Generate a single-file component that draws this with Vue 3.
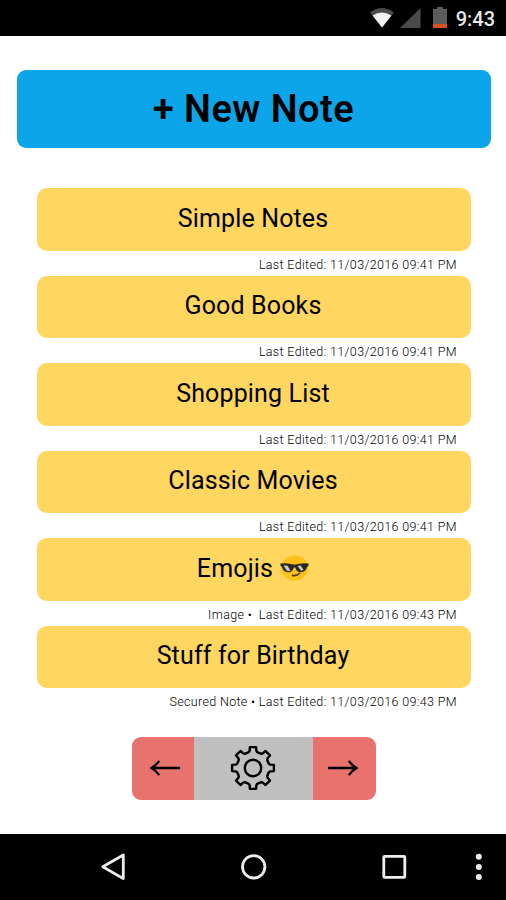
<template>
  <div class="phone">
    <header class="status-bar">
      <svg class="wifi" width="24" height="20" viewBox="0 0 24 20">
        <path d="M0 4.6Q12-4.4 24 4.6L12 19.5Z" fill="#4a4a4a" />
        <path d="M2.6 7.6Q12 1.4 21.4 7.6L12 19.5Z" fill="#f2f2f2" />
      </svg>
      <svg class="signal" width="21" height="20" viewBox="0 0 21 20">
        <path d="M20.5 0V20H0Z" fill="#4a4a4a" />
      </svg>
      <svg class="battery" width="14" height="21" viewBox="0 0 14 21">
        <path d="M4 0H10V2H14V17H0V2H4Z" fill="#5c5c5c" />
        <path d="M0 17H14V21H0Z" fill="#d9501e" />
      </svg>
      <span class="clock">9:43</span>
    </header>

    <main class="content">
      <button class="new-note">+ New Note</button>

      <ul class="notes">
        <li v-for="note in notes" :key="note.title" class="note">
          <button class="note-title">
            {{ note.title }}
            <svg v-if="note.cool" class="emoji" width="29" height="26" viewBox="0 0 28 26">
              <ellipse cx="14" cy="13" rx="13.6" ry="12.6" fill="#fcc21b" />
              <path d="M0 8.6Q7 7.6 14 9.8Q21 7.6 28 8.6V11L26.6 11.8Q25.4 17.2 20.4 17.2Q16 17 14.8 12.4H13.4Q12 17 7.6 17.2Q2.6 17.2 1.4 11.8L0 11Z" fill="#2b2a25" />
              <path d="M3 10.4L7 10.8L10 16L6.4 15.8ZM17 11L20 10.6L23 14.8L20.6 15.8Z" fill="#cfcdc0" />
              <path d="M12 20.4Q16 21.4 19 18.4" fill="none" stroke="#5b3a12" stroke-width="1.6" stroke-linecap="round" />
            </svg>
          </button>
          <div class="note-meta">{{ note.prefix }}Last Edited: {{ note.edited }}</div>
        </li>
      </ul>

      <nav class="pager">
        <button class="pager-arrow prev">
          <svg width="32" height="18" viewBox="0 0 32 18">
            <path d="M31 9H3M10.2 1.8Q7 6.6 2.2 9Q7 11.4 10.2 16.2" />
          </svg>
        </button>
        <button class="pager-settings">
          <svg width="46" height="46" viewBox="-23 -23 46 46">
            <path :d="gearPath" />
            <circle r="8.2" />
          </svg>
        </button>
        <button class="pager-arrow next">
          <svg width="32" height="18" viewBox="0 0 32 18">
            <path d="M1 9H29M21.8 1.8Q25 6.6 29.8 9Q25 11.4 21.8 16.2" />
          </svg>
        </button>
      </nav>
    </main>

    <footer class="nav-bar">
      <svg width="426" height="66" viewBox="80 834 426 66">
        <path d="M123.3 855V878.6L102.8 866.8Z" />
        <circle cx="253.7" cy="866.8" r="11.2" />
        <rect x="383.8" y="856.3" width="21" height="21" rx="0.8" />
        <g class="dots">
          <circle cx="478.8" cy="856.8" r="3" />
          <circle cx="478.8" cy="866.9" r="3" />
          <circle cx="478.8" cy="877" r="3" />
        </g>
      </svg>
    </footer>
  </div>
</template>

<script setup>
const notes = [
  { title: 'Simple Notes', prefix: '', edited: '11/03/2016 09:41 PM' },
  { title: 'Good Books', prefix: '', edited: '11/03/2016 09:41 PM' },
  { title: 'Shopping List', prefix: '', edited: '11/03/2016 09:41 PM' },
  { title: 'Classic Movies', prefix: '', edited: '11/03/2016 09:41 PM' },
  { title: 'Emojis', prefix: 'Image •\u00a0 ', edited: '11/03/2016 09:43 PM', cool: true },
  { title: 'Stuff for Birthday', prefix: 'Secured Note • ', edited: '11/03/2016 09:43 PM' }
];

// One tooth plus the valley after it, turned eight times
const tooth = [[-4.2, -15.8], [-3.4, -17.2], [-3.1, -20.9], [3.1, -20.9], [3.4, -17.2], [4.2, -15.8]];

const gearPath = buildGear();

function buildGear() {
  const points = [];
  for (let i = 0; i < 8; i++) {
    const a = (i * Math.PI) / 4;
    tooth.forEach(([x, y]) => {
      const px = x * Math.cos(a) - y * Math.sin(a);
      const py = x * Math.sin(a) + y * Math.cos(a);
      points.push(px.toFixed(2) + ' ' + py.toFixed(2));
    });
  }
  return 'M' + points.join('L') + 'Z';
}
</script>

<style>
body {
  margin: 0;
}
</style>

<style scoped>
.phone {
  display: flex;
  flex-direction: column;
  height: 900px;
  background: #fff;
  color: #000;
  font-family: Roboto, "Liberation Sans", sans-serif;
}

button {
  border: none;
  padding: 0;
  color: inherit;
  font-family: inherit;
}

.status-bar {
  display: flex;
  align-items: center;
  justify-content: flex-end;
  box-sizing: border-box;
  height: 35.5px;
  padding: 0 11px 0 0;
  background: #000;
}

.wifi {
  margin-right: 6px;
}

.signal {
  margin-right: 12px;
}

.battery {
  margin-right: 9px;
}

.clock {
  color: #e8e8e8;
  font-size: 20px;
  font-weight: 500;
  line-height: 38px;
  padding-top: 2px;
}

.content {
  flex: 1;
  display: flex;
  flex-direction: column;
  align-items: center;
  padding-left: 1px;
}

.new-note {
  width: 474px;
  height: 78px;
  margin-top: 34.5px;
  border-radius: 9px;
  background: #0da5e9;
  font-size: 38px;
  font-weight: 600;
  letter-spacing: 0.45px;
}

.notes {
  width: 434px;
  margin: 40.4px 0 0;
  padding: 0;
  list-style: none;
}

.note {
  height: 87.5px;
}

.note-title {
  display: flex;
  align-items: center;
  justify-content: center;
  gap: 7px;
  width: 100%;
  height: 62.5px;
  padding: 0 1px 3px 0;
  border-radius: 10px;
  background: #ffd65f;
  font-size: 25px;
  font-weight: 400;
  letter-spacing: 0.15px;
}

.note-meta {
  padding-right: 13.5px;
  font-size: 12.5px;
  font-weight: 300;
  letter-spacing: 0.35px;
  line-height: 27px;
  text-align: right;
  white-space: pre;
  color: #000;
}

.pager {
  display: flex;
  width: 244px;
  height: 63px;
  margin-top: 23.5px;
  border-radius: 9px;
  overflow: hidden;
}

.pager button {
  display: flex;
  align-items: center;
  justify-content: center;
}

.pager-arrow {
  width: 62.5px;
  background: #e8736e;
}

.pager .prev {
  padding-left: 4px;
}

.pager .next {
  padding-right: 3px;
}

.pager .pager-settings {
  flex: 1;
  padding-right: 2px;
  background: #c0c0c0;
}

.pager svg {
  fill: none;
  stroke: #000;
  stroke-width: 2.4;
  stroke-linejoin: round;
}

.nav-bar {
  display: flex;
  justify-content: flex-end;
  height: 66.5px;
  background: #000;
}

.nav-bar svg {
  fill: none;
  stroke: #eee;
  stroke-width: 2.8;
  stroke-linejoin: round;
}

.nav-bar .dots {
  fill: #eee;
  stroke: none;
}
</style>
